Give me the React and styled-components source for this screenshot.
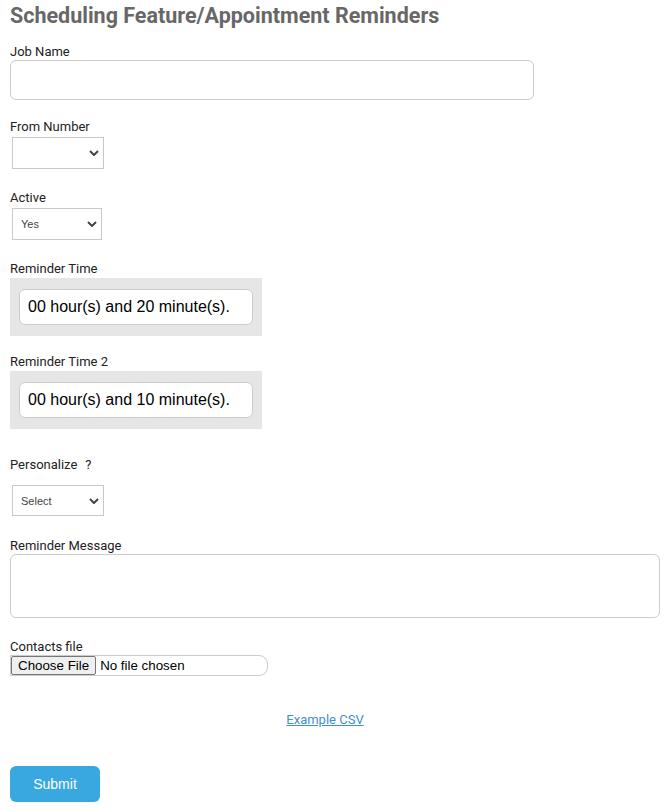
import React from "react";
import styled, { createGlobalStyle } from "styled-components";

const Global = createGlobalStyle`
  html, body { margin: 0; padding: 0; background: #fff; }
  body { font-family: Roboto, "Liberation Sans", Arial, sans-serif; }
  * { box-sizing: border-box; }
`;

const Page = styled.form`
  padding: 0 10px 8px 10px;
  display: flex;
  flex-direction: column;
  align-items: flex-start;
`;

const Title = styled.h2`
  margin: 2px 0 0 0;
  font-family: Roboto, "Liberation Sans", Arial, sans-serif;
  font-weight: 700;
  font-size: 21.5px;
  line-height: 27px;
  color: #676767;
`;

const Field = styled.div`
  display: flex;
  flex-direction: column;
  align-items: flex-start;
  margin-top: ${(p) => p.$gap}px;
`;

const Label = styled.label`
  font-family: Roboto, "Liberation Sans", Arial, sans-serif;
  font-size: 13px;
  line-height: 16px;
  color: #222;
  margin-bottom: ${(p) => p.$below || 0}px;
`;

const Help = styled.span`
  margin-left: 8px;
`;

const TextInput = styled.input`
  width: 524px;
  height: 40px;
  border: 1px solid #cccccc;
  border-radius: 6px;
  background: #fff;
  padding: 0 10px;
  font-size: 14px;
  outline: none;
`;

const SelectWrap = styled.div`
  position: relative;
  margin: 2px 0 0 2px;
  width: ${(p) => p.$w}px;
  height: ${(p) => p.$h || 32}px;
`;

const Select = styled.select`
  appearance: none;
  -webkit-appearance: none;
  width: 100%;
  height: 100%;
  border: 1px solid #c8c8c8;
  border-radius: 0;
  background: #fff;
  padding: 0 0 0 8px;
  font-family: "Liberation Sans", Arial, sans-serif;
  font-size: 11px;
  color: #444;
  outline: none;
`;

const Chevron = styled.svg`
  position: absolute;
  right: 5px;
  top: 50%;
  margin-top: -3px;
  width: 10px;
  height: 6px;
  pointer-events: none;
`;

const TimeBox = styled.div`
  background: #e6e6e6;
  padding: 11px 9px 11px 9px;
  width: 252px;
`;

const TimeInput = styled.div`
  height: 36px;
  background: #fff;
  border: 1px solid #cccccc;
  border-radius: 6px;
  padding: 0 0 0 8px;
  display: flex;
  align-items: center;
  font-family: "Liberation Sans", Arial, sans-serif;
  font-size: 16px;
  color: #000;
  white-space: nowrap;
`;

const TextArea = styled.textarea`
  width: 650px;
  height: 64px;
  border: 1px solid #cccccc;
  border-radius: 6px;
  resize: none;
  outline: none;
  display: block;
`;

const FileBox = styled.div`
  width: 258px;
  height: 21px;
  border: 1px solid #cccccc;
  border-radius: 0 9px 9px 0;
  display: flex;
  align-items: stretch;
  font-family: "Liberation Sans", Arial, sans-serif;
  font-size: 13.33px;
  color: #000;
`;

const FileButton = styled.button`
  margin: 0;
  padding: 0 6px;
  background: #efefef;
  border: 1px solid #767676;
  border-radius: 2px;
  font-family: "Liberation Sans", Arial, sans-serif;
  font-size: 13.33px;
  color: #000;
  line-height: 17px;
`;

const FileName = styled.span`
  display: flex;
  align-items: center;
  padding-left: 4px;
`;

const LinkRow = styled.div`
  width: 630px;
  display: flex;
  justify-content: center;
  margin-top: 36px;
`;

const Link = styled.a`
  font-family: Roboto, "Liberation Sans", Arial, sans-serif;
  font-size: 13px;
  line-height: 16px;
  color: #3f8fd2;
  text-decoration: underline;
`;

const Submit = styled.button`
  margin-top: 38px;
  width: 90px;
  height: 36px;
  border: none;
  border-radius: 6px;
  background: #3aa8e0;
  color: #fff;
  font-family: "Liberation Sans", Arial, sans-serif;
  font-size: 14px;
`;

function Dropdown({ w, h, children }) {
  return (
    <SelectWrap $w={w} $h={h}>
      <Select defaultValue="">{children}</Select>
      <Chevron viewBox="0 0 10 6">
        <path d="M1 1 L5 5 L9 1" fill="none" stroke="#444" strokeWidth="2" />
      </Chevron>
    </SelectWrap>
  );
}

export default function App() {
  return (
    <>
      <Global />
      <Page onSubmit={(e) => e.preventDefault()}>
        <Title>Scheduling Feature/Appointment Reminders</Title>

        <Field $gap={15}>
          <Label>Job Name</Label>
          <TextInput type="text" />
        </Field>

        <Field $gap={19}>
          <Label>From Number</Label>
          <Dropdown w={92}>
            <option value=""></option>
          </Dropdown>
        </Field>

        <Field $gap={21}>
          <Label>Active</Label>
          <Dropdown w={90}>
            <option value="">Yes</option>
            <option value="no">No</option>
          </Dropdown>
        </Field>

        <Field $gap={21}>
          <Label $below={1}>Reminder Time</Label>
          <TimeBox>
            <TimeInput>00 hour(s) and 20 minute(s).</TimeInput>
          </TimeBox>
        </Field>

        <Field $gap={18}>
          <Label $below={1}>Reminder Time 2</Label>
          <TimeBox>
            <TimeInput>00 hour(s) and 10 minute(s).</TimeInput>
          </TimeBox>
        </Field>

        <Field $gap={28}>
          <Label $below={10}>
            Personalize<Help>?</Help>
          </Label>
          <Dropdown w={92} h={31}>
            <option value="">Select</option>
          </Dropdown>
        </Field>

        <Field $gap={22}>
          <Label>Reminder Message</Label>
          <TextArea />
        </Field>

        <Field $gap={21}>
          <Label>Contacts file</Label>
          <FileBox>
            <FileButton type="button">Choose File</FileButton>
            <FileName>No file chosen</FileName>
          </FileBox>
        </Field>

        <LinkRow>
          <Link href="#">Example CSV</Link>
        </LinkRow>

        <Submit type="submit">Submit</Submit>
      </Page>
    </>
  );
}
